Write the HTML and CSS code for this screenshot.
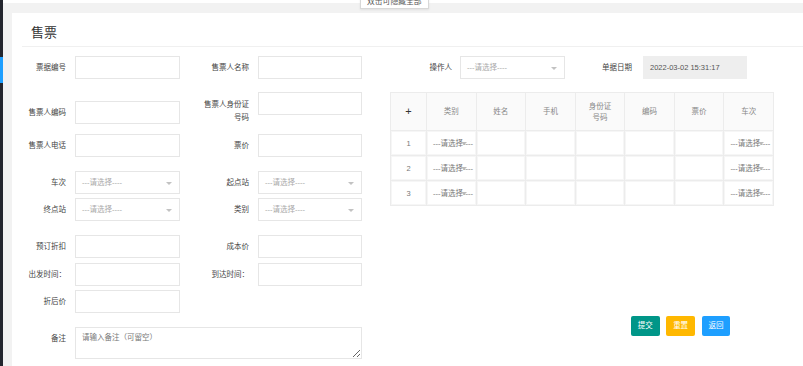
FILE: index.html
```html
<!DOCTYPE html>
<html lang="zh-CN">
<head>
<meta charset="utf-8">
<title>售票</title>
<link rel="stylesheet" href="styles.css">
</head>
<body>
<div class="app">
  <aside class="side"><span class="side-active"></span></aside>
  <div class="main">
    <div class="topbar"></div>
    <div class="tip">双击可隐藏全部</div>
    <div class="card">
      <div class="card-head"><h1 class="title">售票</h1></div>
      <div class="card-body">
        <div class="left">
          <div class="row">
            <div class="item"><label class="lbl">票据编号</label><div class="ctl"></div></div>
            <div class="item"><label class="lbl lbl-w">售票人名称</label><div class="ctl ctl-r"></div></div>
          </div>
          <div class="row row-end mt12">
            <div class="item"><label class="lbl">售票人编码</label><div class="ctl"></div></div>
            <div class="item item-top"><label class="lbl lbl-w lbl-2">售票人身份证<br>号码</label><div class="ctl ctl-r"></div></div>
          </div>
          <div class="row mt10">
            <div class="item"><label class="lbl">售票人电话</label><div class="ctl"></div></div>
            <div class="item"><label class="lbl lbl-w">票价</label><div class="ctl ctl-r"></div></div>
          </div>
          <div class="row mt14">
            <div class="item"><label class="lbl">车次</label><div class="ctl sel"><span class="ph">---请选择----</span><i class="arrow"></i></div></div>
            <div class="item"><label class="lbl lbl-w">起点站</label><div class="ctl ctl-r sel"><span class="ph">---请选择----</span><i class="arrow"></i></div></div>
          </div>
          <div class="row mt4">
            <div class="item"><label class="lbl">终点站</label><div class="ctl sel"><span class="ph">---请选择----</span><i class="arrow"></i></div></div>
            <div class="item"><label class="lbl lbl-w">类别</label><div class="ctl ctl-r sel"><span class="ph">---请选择----</span><i class="arrow"></i></div></div>
          </div>
          <div class="row mt14">
            <div class="item"><label class="lbl">预订折扣</label><div class="ctl"></div></div>
            <div class="item"><label class="lbl lbl-w">成本价</label><div class="ctl ctl-r"></div></div>
          </div>
          <div class="row mt5">
            <div class="item"><label class="lbl">出发时间：</label><div class="ctl"></div></div>
            <div class="item"><label class="lbl lbl-w">到达时间：</label><div class="ctl ctl-r"></div></div>
          </div>
          <div class="row mt4">
            <div class="item"><label class="lbl">折后价</label><div class="ctl"></div></div>
          </div>
          <div class="row mt14">
            <div class="item"><label class="lbl">备注</label><textarea class="memo" placeholder="请输入备注（可留空）"></textarea></div>
          </div>
        </div>
        <div class="right">
          <div class="row">
            <div class="item"><label class="lbl lbl-op">操作人</label><div class="ctl sel"><span class="ph">---请选择----</span><i class="arrow"></i></div></div>
            <div class="item"><label class="lbl lbl-date">单据日期</label><div class="ctl ctl-r ctl-dis">2022-03-02 15:31:17</div></div>
          </div>
          <table class="grid">
            <colgroup><col class="c0"><col><col><col><col><col><col><col></colgroup>
            <thead>
              <tr><th class="plus">+</th><th>类别</th><th>姓名</th><th>手机</th><th>身份证<br>号码</th><th>编码</th><th>票价</th><th>车次</th></tr>
            </thead>
            <tbody>
              <tr><td class="num">1</td><td><div class="cs"><span>---请选择----</span><i class="arrow arrow-s"></i></div></td><td></td><td></td><td></td><td></td><td></td><td><div class="cs"><span>---请选择----</span><i class="arrow arrow-s"></i></div></td></tr>
              <tr><td class="num">2</td><td><div class="cs"><span>---请选择----</span><i class="arrow arrow-s"></i></div></td><td></td><td></td><td></td><td></td><td></td><td><div class="cs"><span>---请选择----</span><i class="arrow arrow-s"></i></div></td></tr>
              <tr><td class="num">3</td><td><div class="cs"><span>---请选择----</span><i class="arrow arrow-s"></i></div></td><td></td><td></td><td></td><td></td><td></td><td><div class="cs"><span>---请选择----</span><i class="arrow arrow-s"></i></div></td></tr>
            </tbody>
          </table>
          <div class="btns">
            <button class="btn btn-ok">提交</button>
            <button class="btn btn-warn">重置</button>
            <button class="btn btn-info">返回</button>
          </div>
        </div>
      </div>
    </div>
  </div>
</div>
</body>
</html>
```
FILE: styles.css
```css
* { box-sizing: border-box; }
html, body { margin: 0; padding: 0; }
body {
  width: 803px;
  height: 366px;
  overflow: hidden;
  background: #f2f2f2;
  font-family: "Liberation Sans", "Noto Sans CJK SC", sans-serif;
  font-size: 7.5px;
  color: #444;
}
.app { display: flex; height: 366px; }
.side { width: 3px; flex: none; background: #23262e; }
.side-active { display: block; margin-top: 57px; height: 26px; background: #1e9fff; }
.main { flex: 1; position: relative; min-width: 0; }
.topbar { height: 3px; background: #fff; }
.tip {
  position: absolute;
  left: 357px;
  top: -5px;
  width: 69px;
  height: 14px;
  background: #fff;
  border: 1px solid #d8d8d8;
  box-shadow: 0 1px 2px rgba(0,0,0,.08);
  font-size: 7.8px;
  line-height: 12px;
  padding-left: 6px;
  color: #555;
  white-space: nowrap;
}
.card { margin: 10px 0 0 9px; background: #fff; height: 353px; overflow: hidden; }
.card-head { margin-left: 10px; height: 34px; border-bottom: 1px solid #f0f0f0; }
.title { margin: 0; padding: 12px 0 0 9px; font-size: 13px; line-height: 16px; font-weight: normal; color: #333; }
.card-body { display: flex; padding-top: 9px; }
.left { width: 350px; flex: none; }
.right { flex: 1; }
.row { display: flex; }
.row-end { align-items: flex-end; }
.mt4 { margin-top: 4px; }
.mt5 { margin-top: 5px; }
.mt10 { margin-top: 10px; }
.mt12 { margin-top: 13px; }
.mt14 { margin-top: 14px; }
.item { display: flex; }
.item-top { align-items: flex-start; }
.lbl {
  width: 63px;
  padding-right: 9px;
  text-align: right;
  line-height: 23px;
  white-space: nowrap;
  color: #444;
}
.lbl-w { width: 78px; }
.lbl-2 { line-height: 13px; padding-top: 6px; }
.lbl-op { width: 98px; padding-right: 8px; }
.lbl-date { width: 78px; padding-right: 11px; }
.ctl {
  position: relative;
  width: 105px;
  height: 23px;
  border: 1px solid #e6e6e6;
  background: #fff;
  line-height: 21px;
  padding-left: 6px;
  white-space: nowrap;
  overflow: hidden;
}
.ctl-r { width: 104px; }
.ctl-dis { background: #eeeeee; border-color: #eeeeee; color: #555; }
.ph { color: #aaa; }
.arrow {
  position: absolute;
  right: 7px;
  top: 10px;
  width: 0;
  height: 0;
  border-left: 3px solid transparent;
  border-right: 3px solid transparent;
  border-top: 3.5px solid #c2c2c2;
}
.memo {
  display: block;
  width: 287px;
  height: 32px;
  border: 1px solid #e6e6e6;
  padding: 3px 6px;
  font-family: inherit;
  font-size: 7.5px;
  line-height: 13px;
  color: #444;
  outline: none;
}
.memo::placeholder { color: #777; }
.grid {
  margin: 13px 0 0 28px;
  width: 384px;
  table-layout: fixed;
  border-collapse: collapse;
  border: 1px solid #ececec;
}
.grid .c0 { width: 36px; }
.grid th {
  height: 38px;
  background: #fafafa;
  border: 1px solid #ececec;
  font-weight: normal;
  color: #888;
  line-height: 11px;
  padding: 0;
}
.grid th.plus { color: #333; font-size: 11px; }
.grid td {
  height: 25px;
  border: 1px solid #ececec;
  padding: 0;
  box-shadow: inset 0 0 0 1px #f6f6f6;
}
.grid td.num { text-align: center; color: #777; }
.cs {
  position: relative;
  height: 23px;
  line-height: 23px;
  padding-left: 6px;
  overflow: hidden;
  white-space: nowrap;
  color: #777;
}
.arrow-s { right: 9px; top: 10px; border-top-color: #bbb; }
.btns { display: flex; gap: 6.6px; margin: 110px 0 0 269px; }
.btn {
  width: 28.7px;
  height: 19.5px;
  padding: 0;
  border: none;
  border-radius: 2px;
  color: #fff;
  font-family: inherit;
  font-size: 7.5px;
  line-height: 19.5px;
}
.btn-ok { background: #009688; }
.btn-warn { background: #ffb800; }
.btn-info { background: #1e9fff; }
```
